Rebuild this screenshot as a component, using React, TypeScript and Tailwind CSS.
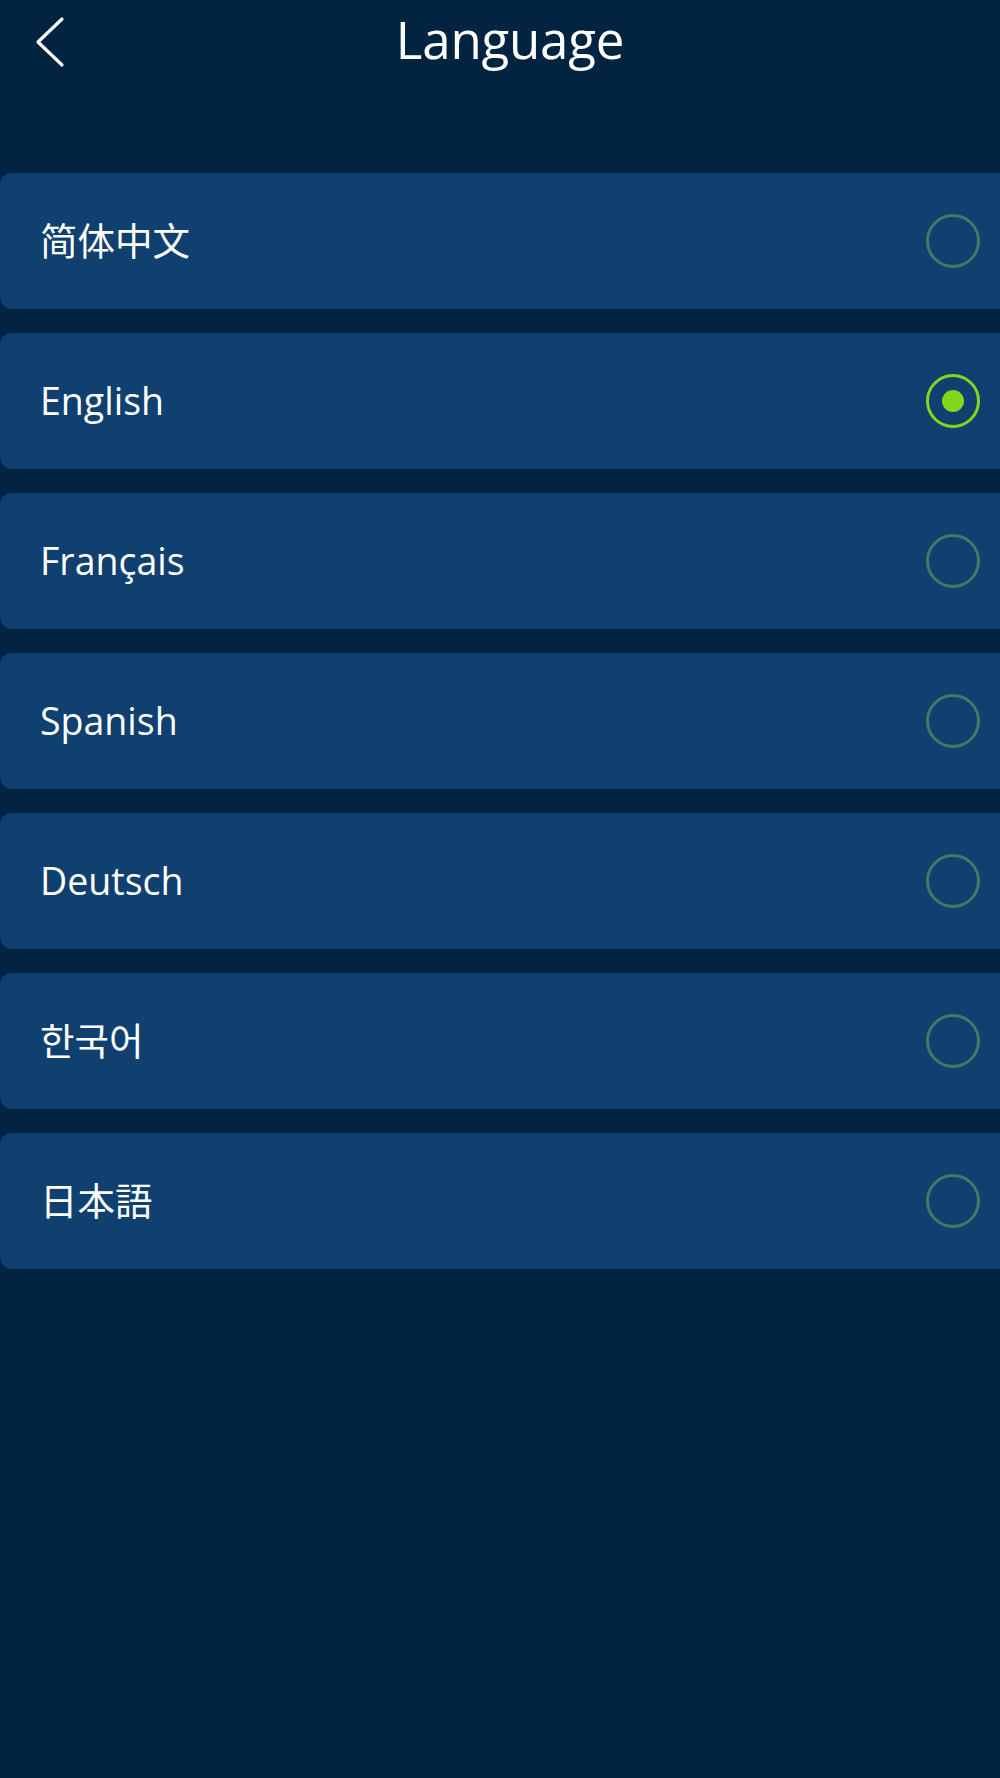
import { useState } from "react";

const languages = [
  { code: "zh", label: "简体中文", font: "font-['Open_Sans','Noto_Sans_CJK_SC',sans-serif]" },
  { code: "en", label: "English", font: "font-['Open_Sans','Noto_Sans_CJK_SC',sans-serif]" },
  { code: "fr", label: "Français", font: "font-['Open_Sans','Noto_Sans_CJK_SC',sans-serif]" },
  { code: "es", label: "Spanish", font: "font-['Open_Sans','Noto_Sans_CJK_SC',sans-serif]" },
  { code: "de", label: "Deutsch", font: "font-['Open_Sans','Noto_Sans_CJK_SC',sans-serif]" },
  { code: "ko", label: "한국어", font: "font-['Open_Sans','Noto_Sans_CJK_KR',sans-serif]" },
  { code: "ja", label: "日本語", font: "font-['Open_Sans','Noto_Sans_CJK_JP',sans-serif]" },
];

function Radio({ checked }: { checked: boolean }) {
  return checked ? (
    <span className="flex h-[54px] w-[54px] items-center justify-center rounded-full border-[3px] border-[#7fd81c]">
      <span className="h-[22px] w-[22px] rounded-full bg-[#7fd81c]" />
    </span>
  ) : (
    <span className="h-[54px] w-[54px] rounded-full border-[3px] border-[#3e7c66]" />
  );
}

export default function App() {
  const [selected, setSelected] = useState("en");

  return (
    <div className="min-h-[1778px] w-full bg-[#022440] text-white font-['Open_Sans',sans-serif]">
      {/* header */}
      <header className="relative flex h-[80px] items-center justify-center pl-[20px]">
        <button className="absolute left-[32px] top-[14px] p-[2px]">
          <svg width="32" height="52" viewBox="0 0 32 52" fill="none">
            <path d="M28 3 L4 26 L28 49" stroke="white" strokeWidth="3.2" strokeLinecap="round" strokeLinejoin="round" />
          </svg>
        </button>
        <h1 className="text-[51px] leading-none tracking-[-0.2px] pb-[2px]">Language</h1>
      </header>

      {/* list */}
      <div className="mt-[93px] flex flex-col gap-[24px]">
        {languages.map((lang) => (
          <div
            key={lang.code}
            onClick={() => setSelected(lang.code)}
            className="flex h-[136px] cursor-pointer items-center justify-between rounded-l-[12px] bg-[#0f406f] pl-[40px] pr-[20px]"
          >
            <span className={`${lang.font} text-[37.5px] leading-none`}>{lang.label}</span>
            <Radio checked={selected === lang.code} />
          </div>
        ))}
      </div>
    </div>
  );
}
